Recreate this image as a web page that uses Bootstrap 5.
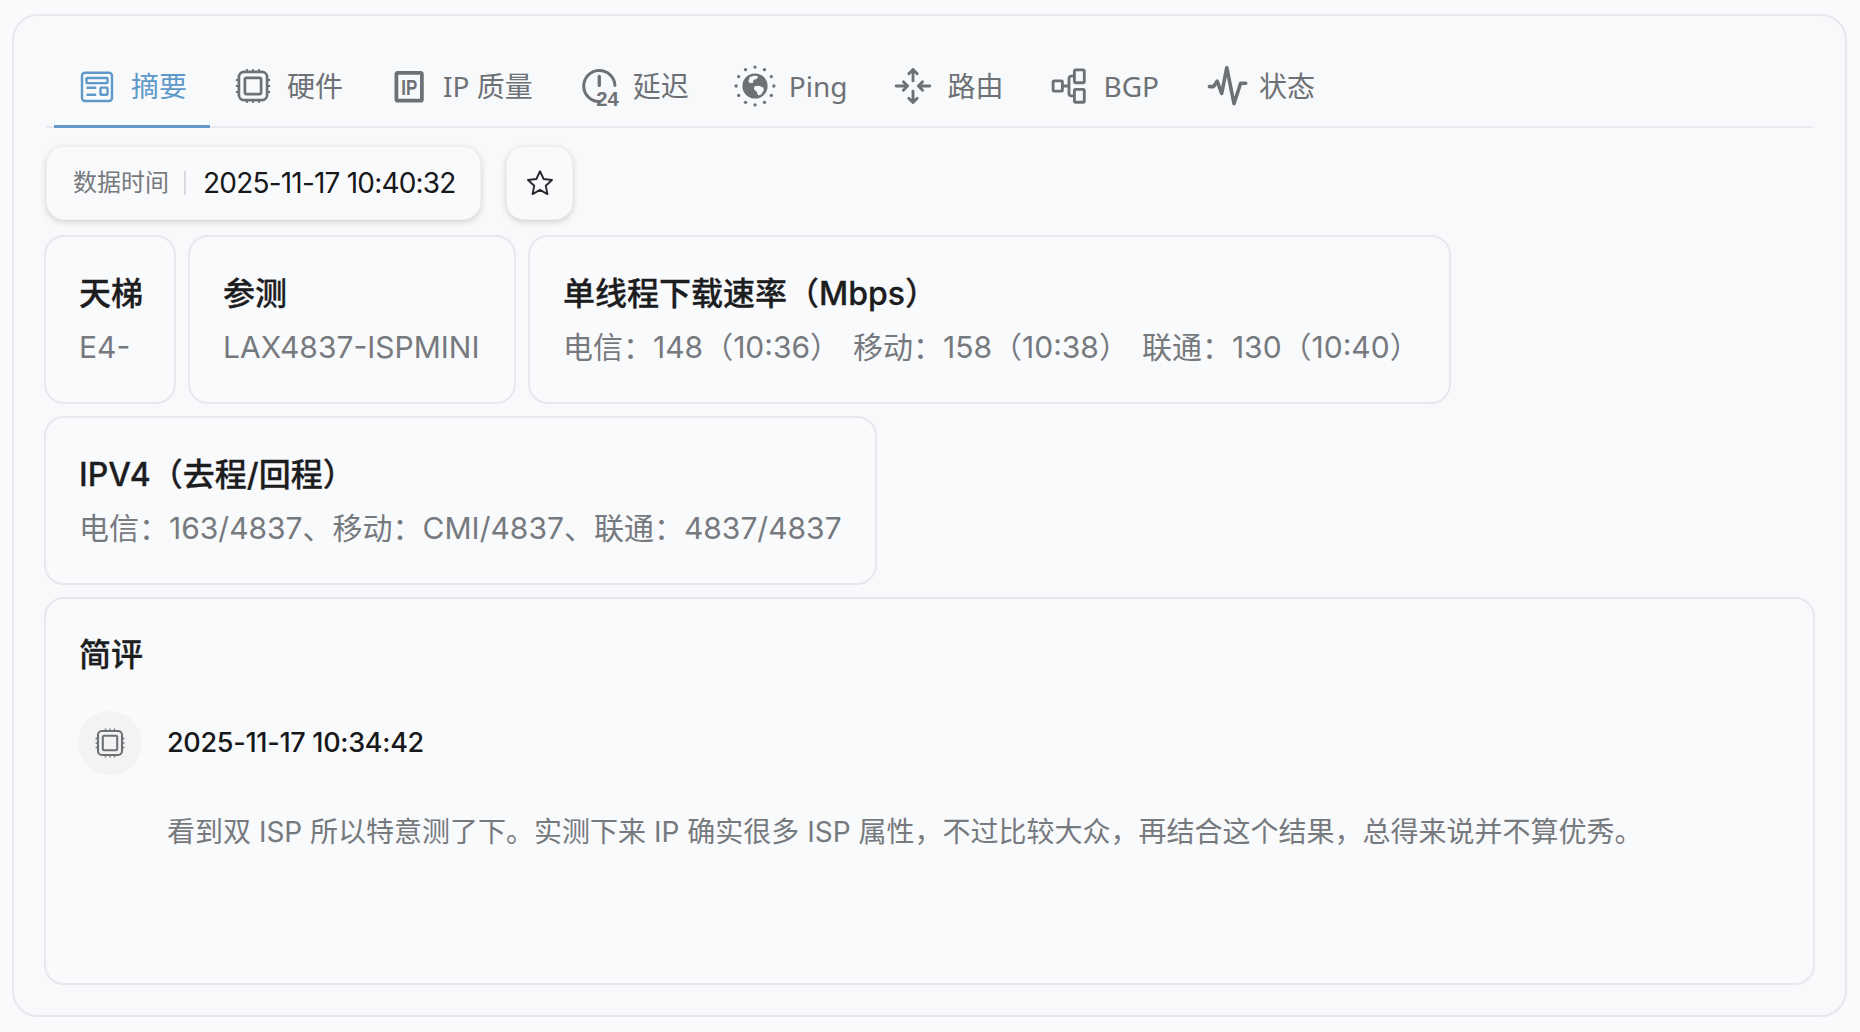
<!doctype html>
<html lang="zh-CN">
<head>
<meta charset="utf-8">
<title>摘要</title>
<link href="https://cdn.jsdelivr.net/npm/bootstrap@5.3.0/dist/css/bootstrap.min.css" rel="stylesheet">
<style>
html,body{height:100%}
body{background:#f9fafc;font-family:Inter,"Noto Sans CJK SC",sans-serif;color:#1c1d1f;overflow:hidden}
.shell{margin:14px 13px 0 12px;width:1835px;height:1003px;border:2px solid #e6e8eb;border-radius:26px;background:#f8f9fb;padding:30px 30px 30px 30px}
.tabbar{margin-left:2px;margin-right:2px;height:82px;border-bottom:2px solid #e8eaed;flex-wrap:nowrap}
.tabitem{display:flex;align-items:center;gap:16px;padding:0 23px 0 25px;height:82px;font-size:28px;color:#6d7175;font-family:"Noto Sans","Noto Sans CJK SC",sans-serif;white-space:nowrap;text-decoration:none;border-bottom:2px solid transparent}
.tabitem svg{width:36px;height:36px;flex:none;overflow:visible}
.tabitem.on{color:#5f99c9;border-bottom:3px solid #669ac6;margin-left:8px}
.chiprow{margin-top:18px;margin-left:2px;gap:25px;height:74px}
.chipbox{background:#f9fafc;border:1px solid #eef0f2;border-radius:18px;box-shadow:0 2px 6px rgba(0,0,0,.16);display:flex;align-items:center}
.datechip{width:435px;padding-left:26px}
.datechip .lbl{font-size:24px;color:#76797d;line-height:1}
.datechip .sep{width:2px;height:24px;background:#d9dbde;margin:0 17px 0 15px}
.datechip .val{font-size:28px;letter-spacing:-.8px;color:#17181a}
.starbtn{width:67px;justify-content:center;padding:0}
.starbtn svg{width:30px;height:30px}
.infocard{background:#f9fafc;border:2px solid #e6e8eb;border-radius:20px;padding:34px 32px 0 33px;height:169px;flex:none}
.infocard .ttl{font-size:32px;line-height:45px;font-weight:500;color:#1c1d1f;white-space:nowrap;-webkit-text-stroke:.3px #1c1d1f}
.infocard .txt{font-size:30px;line-height:45px;margin-top:9px;color:#76797d;white-space:nowrap}
.inforow{margin-top:15px;gap:12px}
.inforow2{margin-top:12px}
.w1{width:132px}.w2{width:328px}.w3{width:923px}.w4{width:833px}
.speed+.speed{margin-left:13px}
.reviewcard{background:#f9fafc;border:2px solid #e6e8eb;border-radius:20px;margin-top:12px;height:388px;padding:33px 33px}
.reviewttl{font-size:32px;line-height:45px;font-weight:500;-webkit-text-stroke:.3px #1c1d1f}
.reviewhead{margin-top:34px;gap:25px}
.avatarbox{width:64px;height:64px;background:#f3f3f4;border-radius:50%;margin-left:-1px}
.avatarbox svg{width:36px;height:36px}
.stamp{font-size:27px;font-weight:500;letter-spacing:-.3px;color:#17181a}
.reviewbody{margin-top:35px;margin-left:88px;font-size:28px;line-height:45px;color:#76797d}
</style>
</head>
<body>
<div class="shell">
  <nav class="nav tabbar">
    <a class="tabitem on" href="#">
      <svg viewBox="0 0 24 24" fill="none" stroke="currentColor" stroke-width="1.6"><rect x="2" y="3.2" width="20" height="18.8" rx="2"/><rect x="5" y="6.7" width="14" height="3.4" rx=".4"/><path d="M5 13.2h6.5M5 17.8h6.5"/><rect x="14.3" y="13.1" width="4.7" height="4.7" rx=".4"/></svg>
      <span>摘要</span></a>
    <a class="tabitem" href="#">
      <svg viewBox="0 0 24 24" fill="none" stroke="currentColor" stroke-width="1.8"><rect x="2.6" y="2.6" width="18.8" height="18.8" rx="3.4"/><rect x="6.6" y="6.6" width="10.8" height="10.8" rx="1"/><path stroke-width="1.2" d="M8 .6v2M12 .6v2M16 .6v2M8 21.4v2M12 21.4v2M16 21.4v2M.6 8h2M.6 12h2M.6 16h2M21.4 8h2M21.4 12h2M21.4 16h2"/></svg>
      <span>硬件</span></a>
    <a class="tabitem" href="#">
      <svg viewBox="0 0 24 24"><rect x="3.6" y="3.2" width="17" height="18.6" rx="1" fill="none" stroke="currentColor" stroke-width="2.5"/><text x="12.2" y="18" text-anchor="middle" fill="currentColor" font-family="Liberation Sans" font-weight="700" font-size="14.5" textLength="10.6" lengthAdjust="spacingAndGlyphs">IP</text></svg>
      <span>IP 质量</span></a>
    <a class="tabitem" href="#">
      <svg viewBox="0 0 24 24" fill="none" stroke="currentColor" stroke-width="2"><path stroke-linecap="round" d="M12.6 22.4A10.4 10.4 0 1 1 22.6 11.6"/><path stroke-width="2.2" stroke-linecap="round" d="M12.2 5.6v6"/><text x="17.6" y="25" text-anchor="middle" fill="currentColor" stroke="none" font-family="Liberation Sans" font-weight="700" font-size="13.5">24</text></svg>
      <span>延迟</span></a>
    <a class="tabitem" href="#">
      <svg viewBox="0 0 24 24"><circle cx="12" cy="12" r="8.4" fill="currentColor"/><path fill="#f8f9fb" d="M8.4 6.3c1.8-1.2 4.4-1.5 5.6-.8l-.7 1.8-2.3.6-.3 2-2 .3-1.1-1.4zM11.6 12.2l3.2-.4 2.8 1.4.3 1.4-1.8 3-2 .8-1-2.6-1.8-1.6z"/><g fill="currentColor"><circle cx="12" cy="-.6" r="1.1"/><circle cx="18.3" cy="1.1" r="1.1"/><circle cx="22.9" cy="5.7" r="1.1"/><circle cx="24.6" cy="12" r="1.1"/><circle cx="22.9" cy="18.3" r="1.1"/><circle cx="18.3" cy="22.9" r="1.1"/><circle cx="12" cy="24.6" r="1.1"/><circle cx="5.7" cy="22.9" r="1.1"/><circle cx="1.1" cy="18.3" r="1.1"/><circle cx="-.6" cy="12" r="1.1"/><circle cx="1.1" cy="5.7" r="1.1"/><circle cx="5.7" cy="1.1" r="1.1"/></g></svg>
      <span>Ping</span></a>
    <a class="tabitem" href="#">
      <svg viewBox="0 0 24 24" fill="none" stroke="currentColor" stroke-width="1.9" stroke-linecap="round" stroke-linejoin="round"><path d="M12 8.6V1M9.2 3.8 12 1l2.8 2.8M12 15.4V23M9.2 20.2 12 23l2.8-2.8M.8 12h7.6M5.6 9.2 8.4 12l-2.8 2.8M23.2 12h-7.6M18.4 9.2 15.6 12l2.8 2.8"/></svg>
      <span>路由</span></a>
    <a class="tabitem" href="#">
      <svg viewBox="0 0 24 24" fill="none" stroke="currentColor" stroke-width="1.9"><rect x="1.4" y="8.6" width="6.2" height="6.8" rx=".6"/><rect x="15.6" y="1.2" width="6.6" height="8.6" rx=".8"/><rect x="15.6" y="14.2" width="6.6" height="8.6" rx=".8"/><path d="M7.6 12h4.4M15.6 5.4h-2a1.6 1.6 0 0 0-1.6 1.6v10a1.6 1.6 0 0 0 1.6 1.6h2"/></svg>
      <span>BGP</span></a>
    <a class="tabitem" href="#">
      <svg viewBox="0 0 24 24" fill="none" stroke="currentColor" stroke-width="2.4" stroke-linecap="round" stroke-linejoin="round"><path d="M1.6 12.4h2.8l2.4-3.6 3 8.2L13.2-.2l4.8 24 4.4-13.6h3.4"/></svg>
      <span>状态</span></a>
  </nav>

  <div class="d-flex chiprow">
    <div class="chipbox datechip"><span class="lbl">数据时间</span><span class="sep"></span><span class="val">2025-11-17 10:40:32</span></div>
    <button type="button" class="btn chipbox starbtn"><svg viewBox="0 0 24 24" fill="none" stroke="#26282b" stroke-width="1.5" stroke-linejoin="round"><path d="M12 2.6l2.9 6.2 6.7.8-5 4.6 1.4 6.7-6-3.4-6 3.4 1.4-6.7-5-4.6 6.7-.8z"/></svg></button>
  </div>

  <div class="d-flex inforow">
    <div class="infocard w1"><div class="ttl">天梯</div><div class="txt">E4-</div></div>
    <div class="infocard w2"><div class="ttl">参测</div><div class="txt">LAX4837-ISPMINI</div></div>
    <div class="infocard w3"><div class="ttl">单线程下载速率（Mbps）</div><div class="txt"><span class="speed">电信：148（10:36）</span><span class="speed">移动：158（10:38）</span><span class="speed">联通：130（10:40）</span></div></div>
  </div>
  <div class="d-flex inforow2">
    <div class="infocard w4"><div class="ttl">IPV4（去程/回程）</div><div class="txt">电信：163/4837、移动：CMI/4837、联通：4837/4837</div></div>
  </div>

  <div class="reviewcard">
    <div class="reviewttl">简评</div>
    <div class="d-flex align-items-center reviewhead">
      <div class="avatarbox d-flex align-items-center justify-content-center"><svg viewBox="0 0 24 24" fill="none" stroke="#6d7175" stroke-width="1.4"><rect x="4" y="4" width="16" height="16" rx="2.6"/><rect x="7.2" y="7.2" width="9.6" height="9.6" rx=".8"/><path stroke-width=".9" d="M9 2.4V4M12 2.4V4M15 2.4V4M9 20v1.6M12 20v1.6M15 20v1.6M2.4 9H4M2.4 12H4M2.4 15H4M20 9h1.6M20 12h1.6M20 15h1.6"/></svg></div>
      <div class="stamp">2025-11-17 10:34:42</div>
    </div>
    <div class="reviewbody">看到双 ISP 所以特意测了下。实测下来 IP 确实很多 ISP 属性，不过比较大众，再结合这个结果，总得来说并不算优秀。</div>
  </div>
</div>
<script src="https://cdn.jsdelivr.net/npm/bootstrap@5.3.0/dist/js/bootstrap.bundle.min.js"></script>
</body>
</html>
